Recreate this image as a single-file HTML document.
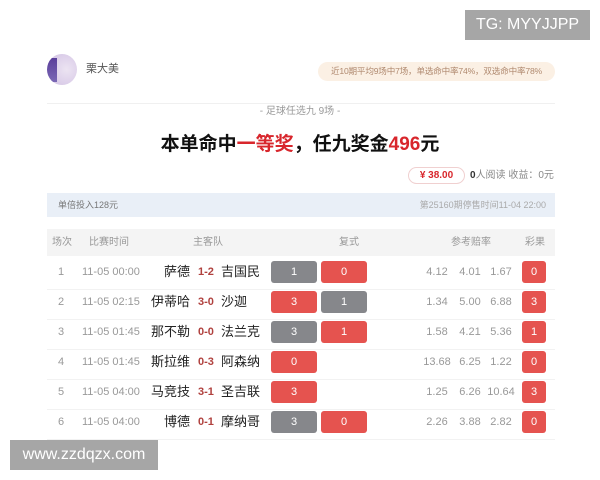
<!DOCTYPE html>
<html><head><meta charset="utf-8"><style>
*{margin:0;padding:0;box-sizing:border-box}
body{width:600px;height:480px;background:#fff;position:relative;overflow:hidden;font-family:"Liberation Sans","Noto Sans CJK SC",sans-serif;color:#333}
.a{position:absolute;white-space:nowrap}
.tg{left:465px;top:10px;width:125px;height:30px;background:#a6a6a6;color:#fff;font-size:16px;line-height:30px;text-align:center}
.wm{left:10px;top:440px;width:148px;height:30px;background:#a6a6a6;color:#fff;font-size:16px;line-height:30px;text-align:center}
.av{left:47px;top:54px;width:30px;height:31px;border-radius:50%;background:radial-gradient(circle at 65% 50%,#ece4f2 0,#ddd0ea 55%,#cdbfe0 100%);overflow:hidden}
.av:before{content:"";position:absolute;left:0;top:4px;width:10px;height:24px;background:linear-gradient(#5a3e9a,#7a68b5);border-radius:50% 0 0 50%}
.pill{left:318px;top:62px;width:237px;height:19px;border-radius:10px;background:#fbf0e4;color:#b08a70;font-size:8.6px;line-height:19px;text-align:center;letter-spacing:-0.2px}
.sep{left:47px;top:103px;width:508px;height:1px;background:#f0f0f0}
.box{position:absolute;width:46px;height:22px;border-radius:3px;color:#fff;font-size:11px;line-height:22px;text-align:center}
.g{background:#86878b}.r{background:#e5534f}
.res{position:absolute;left:522px;width:24px;height:22px;border-radius:3px;background:#e5534f;color:#fff;font-size:11px;line-height:22px;text-align:center}
.c{color:#999;font-size:10px;position:absolute;line-height:22px}
.t{font-size:13px;color:#222;position:absolute;line-height:22px}
.s{font-size:11px;color:#b0413e;font-weight:bold;position:absolute;line-height:22px}
</style></head><body>
<div class="a tg">TG: MYYJJPP</div>
<div class="a av"></div>
<div class="a" style="left:86px;top:62px;font-size:11px;line-height:14px;color:#555">栗大美</div>
<div class="a pill">近10期平均9场中7场，单选命中率74%，双选命中率78%</div>
<div class="a sep"></div>
<div class="a" style="left:0;width:600px;top:105px;line-height:14px;text-align:center;font-size:10px;color:#999">- 足球任选九 9场 -</div>
<div class="a" style="left:0;width:600px;top:132px;line-height:26px;text-align:center;font-size:19px;font-weight:bold;color:#111">本单命中<span style="color:#d8262c">一等奖</span>，任九奖金<span style="color:#d8262c">496</span>元</div>
<div class="a" style="left:408px;top:167px;width:57px;height:17px;border:1px solid #f0d0d0;border-radius:9px;color:#d8262c;font-size:10px;font-weight:bold;line-height:15px;text-align:center">¥ 38.00</div>
<div class="a" style="left:470px;top:169px;font-size:10px;line-height:14px;color:#888"><b style="color:#333">0</b>人阅读 收益：0元</div>
<div class="a" style="left:47px;top:193px;width:508px;height:24px;background:#e9eff7"></div>
<div class="a" style="left:58px;top:199px;font-size:9px;line-height:12px;color:#777">单倍投入128元</div>
<div class="a" style="left:400px;top:199px;width:146px;text-align:right;font-size:9px;line-height:12px;color:#aaa">第25160期停售时间11-04 22:00</div>
<div class="a" style="left:47px;top:229px;width:508px;height:27px;background:#f4f4f4"></div>
<div class="c" style="left:52px;top:232px">场次</div>
<div class="c" style="left:89px;top:232px">比赛时间</div>
<div class="c" style="left:193px;top:232px">主客队</div>
<div class="c" style="left:339px;top:232px">复式</div>
<div class="c" style="left:451px;top:232px">参考赔率</div>
<div class="c" style="left:525px;top:232px">彩果</div>
<div id="rows"></div>
<script>
var d=[["1","11-05 00:00","萨德","1-2","吉国民",[["g","1"],["r","0"]],["4.12","4.01","1.67"],"0"],
["2","11-05 02:15","伊蒂哈","3-0","沙迦",[["r","3"],["g","1"]],["1.34","5.00","6.88"],"3"],
["3","11-05 01:45","那不勒","0-0","法兰克",[["g","3"],["r","1"]],["1.58","4.21","5.36"],"1"],
["4","11-05 01:45","斯拉维","0-3","阿森纳",[["r","0"]],["13.68","6.25","1.22"],"0"],
["5","11-05 04:00","马竞技","3-1","圣吉联",[["r","3"]],["1.25","6.26","10.64"],"3"],
["6","11-05 04:00","博德","0-1","摩纳哥",[["g","3"],["r","0"]],["2.26","3.88","2.82"],"0"]];
var h="";
d.forEach(function(r,i){var y=260+i*30,ty=y+1;
h+='<div class="a" style="left:47px;top:'+(y+29)+'px;width:508px;height:1px;background:#f2f2f2"></div>';
h+='<div class="c" style="left:58px;top:'+ty+'px;font-size:11px">'+r[0]+'</div>';
h+='<div class="c" style="left:82px;top:'+ty+'px;font-size:11px">'+r[1]+'</div>';
h+='<div class="t" style="left:110px;width:80px;text-align:right;top:'+ty+'px">'+r[2]+'</div>';
h+='<div class="s" style="left:198px;top:'+ty+'px">'+r[3]+'</div>';
h+='<div class="t" style="left:221px;top:'+ty+'px">'+r[4]+'</div>';
r[5].forEach(function(b,j){h+='<div class="box '+b[0]+'" style="left:'+(271+j*50)+'px;top:'+(y+1)+'px">'+b[1]+'</div>';});
var ox=[437,470,501];r[6].forEach(function(o,j){h+='<div class="c" style="left:'+(ox[j]-20)+'px;width:40px;text-align:center;top:'+ty+'px;font-size:11px">'+o+'</div>';});
h+='<div class="res" style="top:'+(y+1)+'px">'+r[7]+'</div>';});
document.getElementById("rows").innerHTML=h;
</script>
<div class="a wm">www.zzdqzx.com</div>
</body></html>
